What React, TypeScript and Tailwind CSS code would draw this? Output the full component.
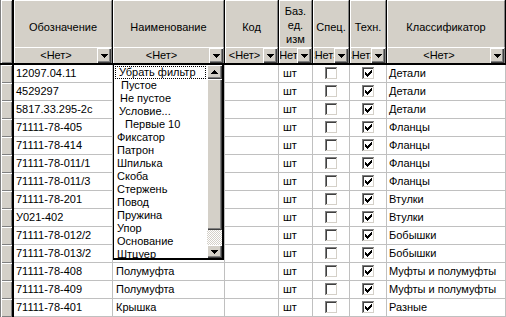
import React from "react";

const cols = [
  { title: "Обозначение", w: "w-[99px]", pt: "pt-[5px]" },
  { title: "Наименование", w: "w-[112px]", pt: "pt-[5px]" },
  { title: "Код", w: "w-[54px]", pt: "pt-[5px]" },
  { title: "Баз.\nед.\nизм", w: "w-[34px]", pt: "pt-[1px]" },
  { title: "Спец.", w: "w-[37px]", pt: "pt-[5px]" },
  { title: "Техн.", w: "w-[37px]", pt: "pt-[5px]" },
  { title: "Классификатор", w: "w-[119px]", pt: "pt-[5px]" },
];

const rows = [
  ["12097.04.11", "", "Детали"],
  ["4529297", "", "Детали"],
  ["5817.33.295-2с", "", "Детали"],
  ["71111-78-405", "", "Фланцы"],
  ["71111-78-414", "", "Фланцы"],
  ["71111-78-011/1", "", "Фланцы"],
  ["71111-78-011/3", "", "Фланцы"],
  ["71111-78-201", "", "Втулки"],
  ["У021-402", "", "Втулки"],
  ["71111-78-012/2", "", "Бобышки"],
  ["71111-78-013/2", "", "Бобышки"],
  ["71111-78-408", "Полумуфта", "Муфты и полумуфты"],
  ["71111-78-409", "Полумуфта", "Муфты и полумуфты"],
  ["71111-78-401", "Крышка", "Разные"],
];

// pl values picked by eye
const items = [
  { t: "Убрать фильтр", pl: "pl-[3px]", focus: true },
  { t: "Пустое", pl: "pl-[6px]" },
  { t: "Не пустое", pl: "pl-[5px]" },
  { t: "Условие...", pl: "pl-[4px]" },
  { t: "Первые 10", pl: "pl-[10px]" },
  { t: "Фиксатор", pl: "pl-[2px]" },
  { t: "Патрон", pl: "pl-[2px]" },
  { t: "Шпилька", pl: "pl-[2px]" },
  { t: "Скоба", pl: "pl-[2px]" },
  { t: "Стержень", pl: "pl-[2px]" },
  { t: "Повод", pl: "pl-[2px]" },
  { t: "Пружина", pl: "pl-[2px]" },
  { t: "Упор", pl: "pl-[2px]" },
  { t: "Основание", pl: "pl-[2px]" },
  { t: "Штцуер", pl: "pl-[2px]" },
];

const bevel =
  "bg-[#d4d0c8] shadow-[inset_1px_1px_0_#ffffff,inset_-1px_-1px_0_#404040,inset_-2px_-2px_0_#808080]";

const Arrow = ({ up }: { up?: boolean }) => {
  const r = up ? [[3, 0, 1], [2, 1, 3], [1, 2, 5], [0, 3, 7]] : [[0, 0, 7], [1, 1, 5], [2, 2, 3], [3, 3, 1]];
  return (
    <svg width="7" height="4" viewBox="0 0 7 4" shapeRendering="crispEdges">
      {r.map(([x, y, w], i) => (
        <rect key={i} x={x} y={y} width={w} height={1} fill="#000" />
      ))}
    </svg>
  );
};

const Check = ({ on }: { on: boolean }) => {
  const tick = [[3, 5], [4, 6], [5, 7], [6, 6], [7, 5], [8, 4], [9, 3]];
  return (
    <svg width="13" height="13" viewBox="0 0 13 13" shapeRendering="crispEdges">
      <rect x="0" y="0" width="13" height="13" fill="#ffffff" />
      <rect x="0" y="0" width="12" height="1" fill="#808080" />
      <rect x="0" y="0" width="1" height="12" fill="#808080" />
      <rect x="1" y="1" width="10" height="1" fill="#404040" />
      <rect x="1" y="1" width="1" height="10" fill="#404040" />
      <rect x="11" y="1" width="1" height="11" fill="#d4d0c8" />
      <rect x="1" y="11" width="11" height="1" fill="#d4d0c8" />
      {on && tick.map(([x, y], i) => <rect key={i} x={x} y={y} width={1} height={3} fill="#000" />)}
    </svg>
  );
};

const DropBtn = () => (
  <div className={`flex h-[15px] w-[14px] shrink-0 items-center justify-center ${bevel}`}>
    <Arrow />
  </div>
);

export default function App() {
  return (
    <div className="relative h-[317px] w-[506px] overflow-hidden bg-white font-['Liberation_Sans',Arial,sans-serif] text-[11px] text-black">
      {/* header */}
      <div className="flex border-b-2 border-black">
        <div className="h-[63px] w-[14px] border-l border-r-2 border-l-[#808080] border-r-black bg-[#d4d0c8] shadow-[inset_1px_1px_0_#ffffff,inset_-1px_-1px_0_#808080]" />
        {cols.map((c) => (
          <div key={c.title} className={`${c.w} flex h-[63px] flex-col border-r border-black bg-[#d4d0c8]`}>
            <div
              className={`flex h-[47px] items-center justify-center whitespace-pre-line border-l border-t border-r border-l-white border-t-white border-r-[#808080] ${c.pt} text-center leading-[14px]`}
            >
              {c.title}
            </div>
            <div className="flex h-[16px] items-center border-l border-t border-r border-l-white border-t-white border-r-[#808080]">
              <div className="flex min-w-0 flex-1 justify-center overflow-hidden whitespace-nowrap">
                <span className="shrink-0">&lt;Нет&gt;</span>
              </div>
              <DropBtn />
            </div>
          </div>
        ))}
      </div>

      {/* rows */}
      {rows.map(([code, name, cls]) => (
        <div key={code} className="flex h-[18px]">
          <div className="w-[14px] border-l border-r-2 border-l-[#808080] border-r-black bg-[#d4d0c8] shadow-[inset_1px_1px_0_#ffffff,inset_-1px_-1px_0_#808080]" />
          <div className="flex w-[99px] items-center border-b border-r border-[#c0c0c0] pl-[2px] whitespace-nowrap">{code}</div>
          <div className="flex w-[112px] items-center border-b border-r border-[#c0c0c0] pl-[3px] whitespace-nowrap">{name}</div>
          <div className="w-[54px] border-b border-r border-[#c0c0c0]" />
          <div className="flex w-[34px] items-center border-b border-r border-[#c0c0c0] pl-[4px]">шт</div>
          <div className="flex w-[37px] items-center justify-center border-b border-r border-[#c0c0c0]">
            <Check on={false} />
          </div>
          <div className="flex w-[37px] items-center justify-center border-b border-r border-[#c0c0c0]">
            <Check on={true} />
          </div>
          <div className="flex w-[119px] items-center border-b border-r border-[#c0c0c0] pl-[2px] whitespace-nowrap">{cls}</div>
        </div>
      ))}

      {/* filter dropdown list */}
      <div className="absolute left-[113px] top-[65px] flex h-[195px] w-[111px] border-b-2 border-l border-r-2 border-black bg-white">
        <div className="flex min-w-0 flex-1 flex-col pt-[1px]">
          {items.map((it) => (
            <div key={it.t} className="h-[13px] shrink-0 px-[1px]">
              <div
                className={`flex h-[13px] items-center whitespace-nowrap leading-[13px] ${it.pl} ${
                  it.focus ? "border border-dotted border-black" : ""
                }`}
              >
                {it.t}
              </div>
            </div>
          ))}
        </div>
        <div className="flex w-[15px] flex-col">
          <div className={`flex h-[14px] items-center justify-center ${bevel}`}>
            <Arrow up />
          </div>
          <div className={`h-[151px] ${bevel}`} />
          <div className="h-[15px] bg-[repeating-conic-gradient(#d4d0c8_0%_25%,#ffffff_0%_50%)] bg-[length:2px_2px]" />
          <div className={`flex h-[13px] items-center justify-center ${bevel}`}>
            <Arrow />
          </div>
        </div>
      </div>
    </div>
  );
}
